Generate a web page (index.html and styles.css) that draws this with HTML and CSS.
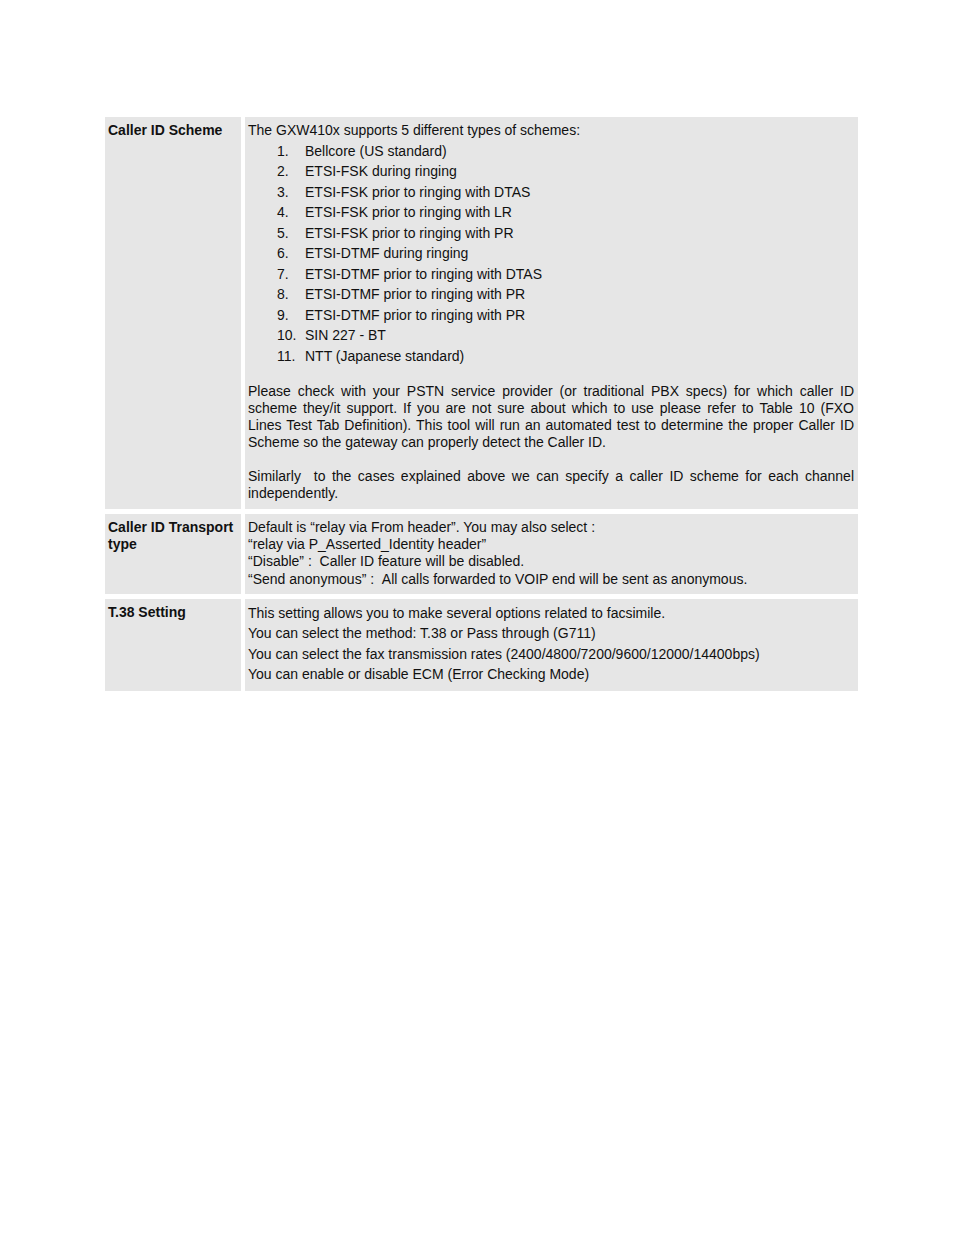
FILE: index.html
```html
<!DOCTYPE html>
<html>
<head>
<meta charset="utf-8">
<link rel="stylesheet" href="styles.css">
</head>
<body>
<div class="table">
  <div class="label">Caller ID Scheme</div>
  <div class="cell cell-scheme">
    <div class="spaced">The GXW410x supports 5 different types of schemes:</div>
    <ol class="list">
      <li><span class="num">1.</span><span>Bellcore (US standard)</span></li>
      <li><span class="num">2.</span><span>ETSI-FSK during ringing</span></li>
      <li><span class="num">3.</span><span>ETSI-FSK prior to ringing with DTAS</span></li>
      <li><span class="num">4.</span><span>ETSI-FSK prior to ringing with LR</span></li>
      <li><span class="num">5.</span><span>ETSI-FSK prior to ringing with PR</span></li>
      <li><span class="num">6.</span><span>ETSI-DTMF during ringing</span></li>
      <li><span class="num">7.</span><span>ETSI-DTMF prior to ringing with DTAS</span></li>
      <li><span class="num">8.</span><span>ETSI-DTMF prior to ringing with PR</span></li>
      <li><span class="num">9.</span><span>ETSI-DTMF prior to ringing with PR</span></li>
      <li><span class="num">10.</span><span>SIN 227 - BT</span></li>
      <li><span class="num">11.</span><span>NTT (Japanese standard)</span></li>
    </ol>
    <p class="para">Please check with your PSTN service provider (or traditional PBX specs) for which caller ID scheme they/it support. If you are not sure about which to use please refer to Table 10 (FXO Lines Test Tab Definition). This tool will run an automated test to determine the proper Caller ID Scheme so the gateway can properly detect the Caller ID.</p>
    <p class="para">Similarly &nbsp;to the cases explained above we can specify a caller ID scheme for each channel independently.</p>
  </div>

  <div class="label">Caller ID Transport type</div>
  <div class="cell cell-transport">
    <div>Default is “relay via From header”. You may also select :</div>
    <div>“relay via P_Asserted_Identity header”</div>
    <div>“Disable” : &nbsp;Caller ID feature will be disabled.</div>
    <div>“Send anonymous” : &nbsp;All calls forwarded to VOIP end will be sent as anonymous.</div>
  </div>

  <div class="label">T.38 Setting</div>
  <div class="cell cell-t38">
    <div class="spaced">This setting allows you to make several options related to facsimile.</div>
    <div class="spaced">You can select the method: T.38 or Pass through (G711)</div>
    <div class="spaced">You can select the fax transmission rates (2400/4800/7200/9600/12000/14400bps)</div>
    <div class="spaced">You can enable or disable ECM (Error Checking Mode)</div>
  </div>
</div>
</body>
</html>
```
FILE: styles.css
```css
html, body {
  margin: 0;
  padding: 0;
  background: #ffffff;
}
body {
  font-family: "Liberation Sans", Arial, sans-serif;
  font-size: 14px;
  line-height: 17.3px;
  color: #111111;
}
.table {
  margin: 117px 0 0 105px;
  width: 753px;
  display: grid;
  grid-template-columns: 136px 613px;
  column-gap: 4px;
  row-gap: 5px;
}
.label {
  background: #e6e6e6;
  font-weight: bold;
  padding: 5px 3px 6px 3px;
}
.cell-scheme .spaced,
.cell-t38 .spaced {
  line-height: 20.5px;
}
.cell {
  background: #e6e6e6;
  padding: 3px 4px 6px 3px;
}
.cell-transport {
  padding-top: 5px;
}
.cell-t38 {
  padding-top: 4px;
  padding-bottom: 6px;
}
.list {
  list-style: none;
  margin: 0;
  padding: 0 0 0 29px;
}
.list li {
  display: flex;
  line-height: 20.5px;
}
.list .num {
  width: 28px;
  flex: none;
}
.para {
  margin: 16.5px 0 0 0;
  text-align: justify;
}
```
